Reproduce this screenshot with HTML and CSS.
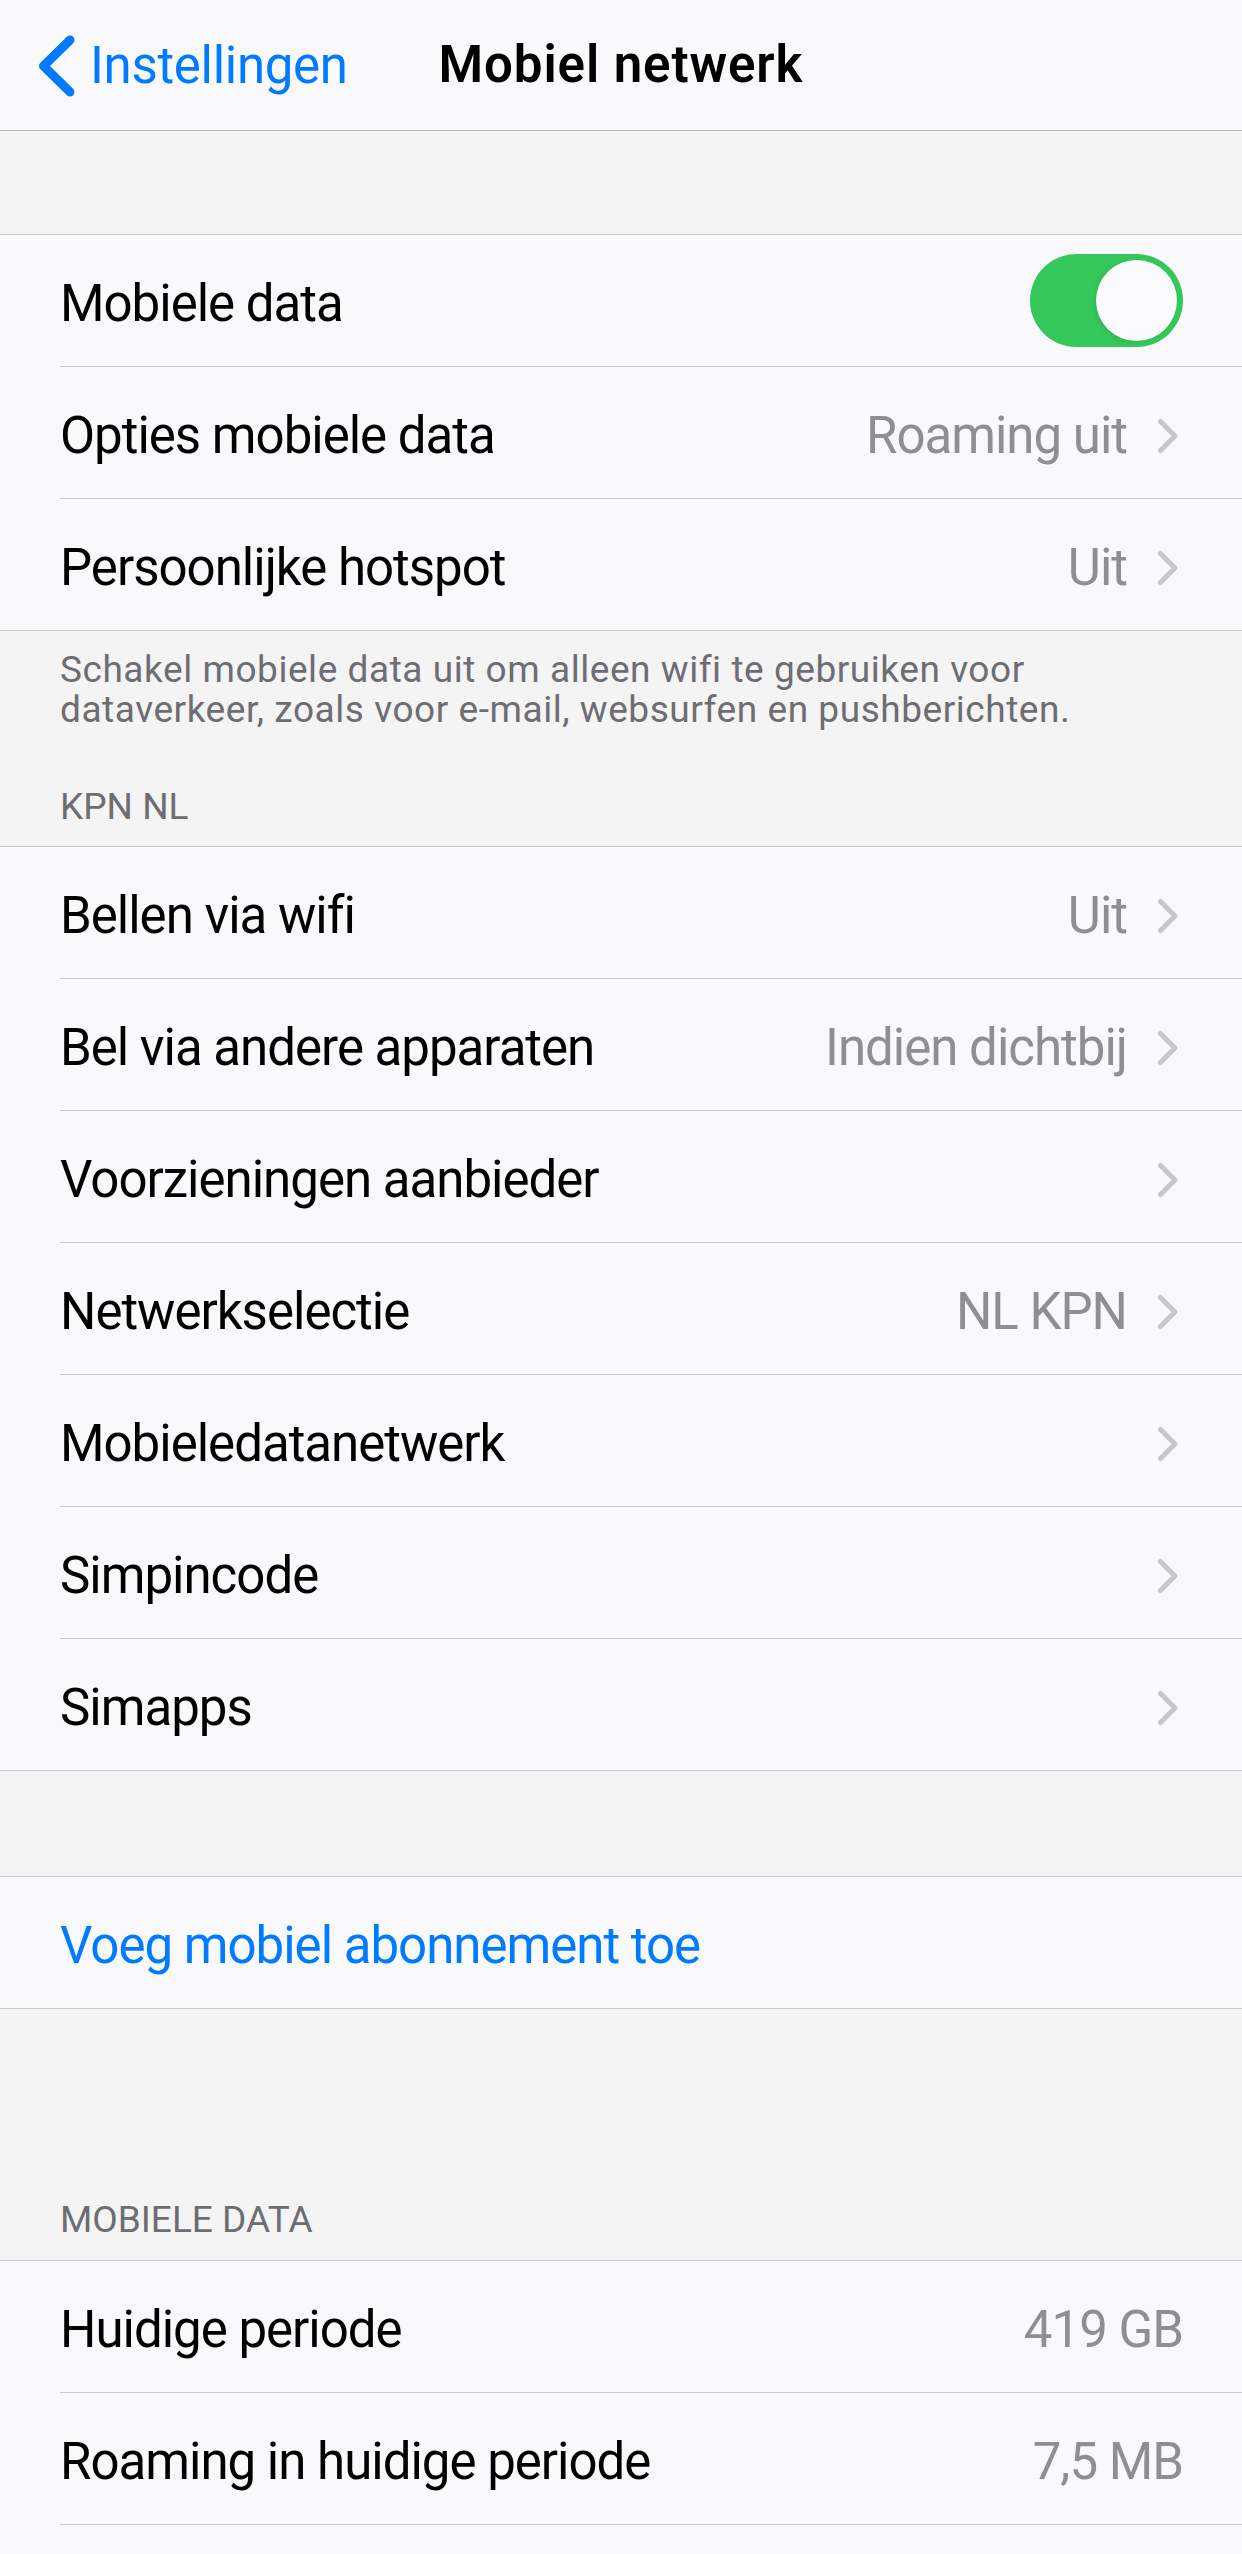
FILE: index.html
```html
<!DOCTYPE html>
<html lang="nl">
<head>
<meta charset="utf-8">
<title>Mobiel netwerk</title>
<link rel="stylesheet" href="styles.css">
</head>
<body>
<header class="nav">
  <a class="back" href="#">
    <svg class="back-icon" width="37" height="62" viewBox="0 0 37 62" aria-hidden="true"><path d="M32 5 L5.5 31 L32 57" fill="none" stroke="#007aff" stroke-width="9" stroke-linecap="round" stroke-linejoin="round"/></svg>
    <span>Instellingen</span>
  </a>
  <h1 class="title">Mobiel netwerk</h1>
  <div class="nav-spacer"></div>
</header>

<div class="gap gap-top"></div>

<section class="group">
  <div class="row row-toggle">
    <span class="label">Mobiele data</span>
    <span class="toggle on"><span class="knob"></span></span>
  </div>
  <div class="row row-link">
    <span class="label">Opties mobiele data</span>
    <span class="value">Roaming uit</span>
    <svg class="chev" width="22" height="36" viewBox="0 0 22 36" aria-hidden="true"><path d="M3.5 3.5 L18 18 L3.5 32.5" fill="none" stroke="#c7c7cc" stroke-width="5" stroke-linecap="round" stroke-linejoin="round"/></svg>
  </div>
  <div class="row row-link">
    <span class="label">Persoonlijke hotspot</span>
    <span class="value">Uit</span>
    <svg class="chev" width="22" height="36" viewBox="0 0 22 36" aria-hidden="true"><path d="M3.5 3.5 L18 18 L3.5 32.5" fill="none" stroke="#c7c7cc" stroke-width="5" stroke-linecap="round" stroke-linejoin="round"/></svg>
  </div>
</section>

<div class="gap gap-footer">
  <p class="footnote">Schakel mobiele data uit om alleen wifi te gebruiken voor dataverkeer, zoals voor e-mail, websurfen en pushberichten.</p>
  <h2 class="section-head section-head-kpn">KPN NL</h2>
</div>

<section class="group">
  <div class="row row-link">
    <span class="label">Bellen via wifi</span>
    <span class="value">Uit</span>
    <svg class="chev" width="22" height="36" viewBox="0 0 22 36" aria-hidden="true"><path d="M3.5 3.5 L18 18 L3.5 32.5" fill="none" stroke="#c7c7cc" stroke-width="5" stroke-linecap="round" stroke-linejoin="round"/></svg>
  </div>
  <div class="row row-link">
    <span class="label">Bel via andere apparaten</span>
    <span class="value">Indien dichtbij</span>
    <svg class="chev" width="22" height="36" viewBox="0 0 22 36" aria-hidden="true"><path d="M3.5 3.5 L18 18 L3.5 32.5" fill="none" stroke="#c7c7cc" stroke-width="5" stroke-linecap="round" stroke-linejoin="round"/></svg>
  </div>
  <div class="row row-link">
    <span class="label">Voorzieningen aanbieder</span>
    <svg class="chev" width="22" height="36" viewBox="0 0 22 36" aria-hidden="true"><path d="M3.5 3.5 L18 18 L3.5 32.5" fill="none" stroke="#c7c7cc" stroke-width="5" stroke-linecap="round" stroke-linejoin="round"/></svg>
  </div>
  <div class="row row-link">
    <span class="label">Netwerkselectie</span>
    <span class="value">NL KPN</span>
    <svg class="chev" width="22" height="36" viewBox="0 0 22 36" aria-hidden="true"><path d="M3.5 3.5 L18 18 L3.5 32.5" fill="none" stroke="#c7c7cc" stroke-width="5" stroke-linecap="round" stroke-linejoin="round"/></svg>
  </div>
  <div class="row row-link">
    <span class="label">Mobieledatanetwerk</span>
    <svg class="chev" width="22" height="36" viewBox="0 0 22 36" aria-hidden="true"><path d="M3.5 3.5 L18 18 L3.5 32.5" fill="none" stroke="#c7c7cc" stroke-width="5" stroke-linecap="round" stroke-linejoin="round"/></svg>
  </div>
  <div class="row row-link">
    <span class="label">Simpincode</span>
    <svg class="chev" width="22" height="36" viewBox="0 0 22 36" aria-hidden="true"><path d="M3.5 3.5 L18 18 L3.5 32.5" fill="none" stroke="#c7c7cc" stroke-width="5" stroke-linecap="round" stroke-linejoin="round"/></svg>
  </div>
  <div class="row row-link">
    <span class="label">Simapps</span>
    <svg class="chev" width="22" height="36" viewBox="0 0 22 36" aria-hidden="true"><path d="M3.5 3.5 L18 18 L3.5 32.5" fill="none" stroke="#c7c7cc" stroke-width="5" stroke-linecap="round" stroke-linejoin="round"/></svg>
  </div>
</section>

<div class="gap gap-mid"></div>

<section class="group">
  <div class="row">
    <span class="label label-action">Voeg mobiel abonnement toe</span>
  </div>
</section>

<div class="gap gap-data">
  <h2 class="section-head">MOBIELE DATA</h2>
</div>

<section class="group">
  <div class="row row-value">
    <span class="label">Huidige periode</span>
    <span class="value">419 GB</span>
  </div>
  <div class="row row-value">
    <span class="label">Roaming in huidige periode</span>
    <span class="value">7,5 MB</span>
  </div>
  <div class="row row-value">
    <span class="label"></span>
  </div>
</section>
</body>
</html>
```
FILE: styles.css
```css
html, body {
  margin: 0;
  padding: 0;
}

body {
  width: 1242px;
  background: #f4f4f4;
  font-family: Roboto, "Liberation Sans", sans-serif;
  color: #000;
  -webkit-font-smoothing: antialiased;
}

/* Navigation bar */
.nav {
  height: 130px;
  background: #f9f9fb;
  border-bottom: 1px solid #b3b3b3;
  display: grid;
  grid-template-columns: 1fr auto 1fr;
  align-items: center;
}

.back {
  display: flex;
  align-items: center;
  gap: 15px;
  padding-left: 38px;
  color: #007aff;
  text-decoration: none;
  font-size: 51px;
  letter-spacing: -0.3px;
}

.back-icon {
  display: block;
  flex: none;
  margin-top: 2px;
}

.title {
  margin: 0;
  font-size: 51px;
  font-weight: 600;
  letter-spacing: 0.9px;
  line-height: 60px;
}

/* Gray spacers */
.gap-top {
  height: 103px;
}

.gap-footer {
  padding: 19px 60px 19px 60px;
}

.gap-mid {
  height: 105px;
}

.gap-data {
  padding: 191px 60px 20px 60px;
}

.footnote {
  margin: 0;
  font-size: 37px;
  line-height: 40px;
  letter-spacing: 0.55px;
  color: #6d6d72;
}

.section-head {
  margin: 0;
  font-size: 37px;
  font-weight: 400;
  line-height: 40px;
  color: #6d6d72;
}

.section-head-kpn {
  margin-top: 57px;
}

/* Groups and rows */
.group {
  background: #f9f9fb;
  border-top: 1px solid #c8c7cc;
  border-bottom: 1px solid #c8c7cc;
}

.row {
  box-sizing: border-box;
  height: 132px;
  margin-left: 60px;
  padding: 6px 59px 0 0;
  border-bottom: 1px solid #c8c7cc;
  display: flex;
  align-items: center;
  font-size: 51px;
  letter-spacing: -1px;
}

.row:last-child {
  height: 131px;
  border-bottom: none;
}

.row-link {
  padding-right: 64px;
}

.row-toggle {
  padding-right: 59px;
}

.label {
  flex: 1;
  white-space: nowrap;
}

.label-action {
  color: #007aff;
}

.value {
  color: #8e8e93;
  white-space: nowrap;
}

.chev {
  display: block;
  flex: none;
  margin-left: 30px;
  margin-right: -1px;
}

/* Toggle switch */
.toggle {
  box-sizing: border-box;
  width: 153px;
  height: 93px;
  border-radius: 47px;
  background: #34c759;
  padding: 6px;
  display: flex;
  justify-content: flex-end;
  margin-top: -6px;
}

.knob {
  width: 81px;
  height: 81px;
  border-radius: 50%;
  background: #fbfbfd;
  box-shadow: -2px 1px 4px rgba(0, 0, 0, 0.08);
}
```
